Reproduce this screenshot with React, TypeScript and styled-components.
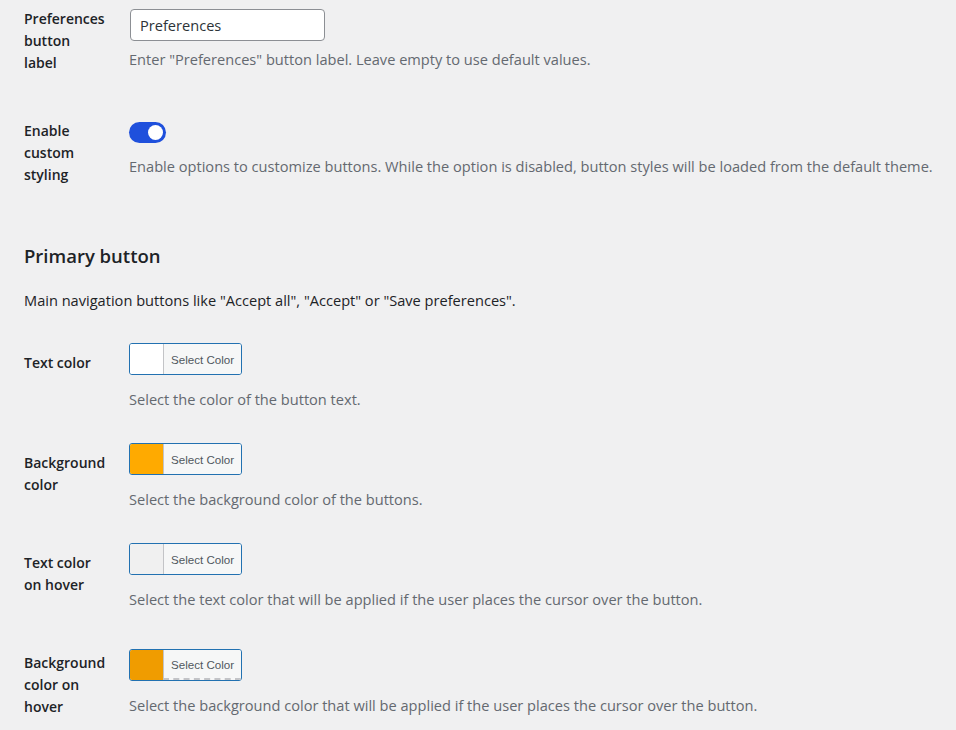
import React, { FC } from "react";
import styled, { createGlobalStyle } from "styled-components";

const GlobalStyle = createGlobalStyle`
  body {
    margin: 0;
    background: #f0f0f1;
    font-family: "Open Sans", "Noto Sans", sans-serif;
    font-size: 14.6px;
    color: #1d2327;
  }
`;

const Page = styled.div`
  padding: 1px 20px 0 24px;
  width: 956px;
  height: 730px;
  box-sizing: border-box;
  overflow: hidden;
`;

const Row = styled.div<{ $gap: number }>`
  display: flex;
  align-items: flex-start;
  margin-top: ${(p) => p.$gap}px;
`;

const Label = styled.div<{ $top: number }>`
  width: 80px;
  margin-right: 25px;
  padding-top: ${(p) => p.$top}px;
  font-size: 14px;
  font-weight: 600;
  line-height: 22px;
`;

const Field = styled.div<{ $top: number }>`
  flex: 1;
  padding-top: ${(p) => p.$top}px;
`;

const TextInput = styled.input`
  display: block;
  box-sizing: border-box;
  width: 195px;
  height: 32px;
  margin-left: 1px;
  padding: 0 9px;
  border: 1px solid #8c8f94;
  border-radius: 4px;
  background: #fff;
  color: #2c3338;
  font-family: inherit;
  font-size: 14.6px;
`;

const Description = styled.p<{ $gap: number }>`
  margin: ${(p) => p.$gap}px 0 0;
  color: #646970;
  line-height: 22px;
`;

const Switch = styled.span`
  display: flex;
  align-items: center;
  justify-content: flex-end;
  box-sizing: border-box;
  width: 37px;
  height: 21px;
  padding: 0 3px;
  border-radius: 11px;
  background: #1f50dc;
`;

const Knob = styled.span`
  width: 15px;
  height: 15px;
  border-radius: 50%;
  background: #fff;
`;

const Heading = styled.h2`
  margin: 57px 0 0;
  font-size: 18.5px;
  font-weight: 600;
  line-height: 25px;
`;

const Intro = styled.p`
  margin: 21px 0 0;
  line-height: 22px;
`;

const ColorButton = styled.button`
  display: flex;
  align-items: stretch;
  box-sizing: border-box;
  height: 32px;
  padding: 0;
  border: 1px solid #2271b1;
  border-radius: 3px;
  background: #f6f7f7;
  overflow: hidden;
  cursor: pointer;
`;

const Swatch = styled.span<{ $color: string }>`
  width: 33px;
  background: ${(p) => p.$color};
`;

const ButtonText = styled.span<{ $dashed?: boolean }>`
  display: flex;
  align-items: center;
  box-sizing: border-box;
  width: 78px;
  padding: 0 7px;
  border-left: 1px solid #c3c4c7;
  border-bottom: ${(p) => (p.$dashed ? "2px dashed #c3c4c7" : "none")};
  background: #f6f7f7;
  color: #50575e;
  font-family: inherit;
  font-size: 11.6px;
  white-space: nowrap;
`;

interface ColorRowProps {
  gap: number;
  top: number;
  label: string;
  color: string;
  hint: string;
  dashed?: boolean;
}

const ColorRow: FC<ColorRowProps> = ({ gap, top, label, color, hint, dashed }) => (
  <Row $gap={gap}>
    <Label $top={9}>{label}</Label>
    <Field $top={top}>
      <ColorButton type="button">
        <Swatch $color={color} />
        <ButtonText $dashed={dashed}>Select Color</ButtonText>
      </ColorButton>
      <Description $gap={13}>{hint}</Description>
    </Field>
  </Row>
);

const App: FC = () => (
  <Page>
    <GlobalStyle />
    <Row $gap={0}>
      <Label $top={7}>Preferences button label</Label>
      <Field $top={8}>
        <TextInput defaultValue="Preferences" />
        <Description $gap={7}>
          Enter "Preferences" button label. Leave empty to use default values.
        </Description>
      </Field>
    </Row>
    <Row $gap={39}>
      <Label $top={7}>Enable custom styling</Label>
      <Field $top={9}>
        <Switch>
          <Knob />
        </Switch>
        <Description $gap={12}>
          Enable options to customize buttons. While the option is disabled, button styles will be
          loaded from the default theme.
        </Description>
      </Field>
    </Row>
    <Heading>Primary button</Heading>
    <Intro>Main navigation buttons like "Accept all", "Accept" or "Save preferences".</Intro>
    <ColorRow
      gap={32}
      top={0}
      label="Text color"
      color="#ffffff"
      hint="Select the color of the button text."
    />
    <ColorRow
      gap={33}
      top={0}
      label="Background color"
      color="#ffaa00"
      hint="Select the background color of the buttons."
    />
    <ColorRow
      gap={33}
      top={0}
      label="Text color on hover"
      color="#f0f0f0"
      hint="Select the text color that will be applied if the user places the cursor over the button."
    />
    <ColorRow
      gap={33}
      top={6}
      label="Background color on hover"
      color="#f09c00"
      hint="Select the background color that will be applied if the user places the cursor over the button."
      dashed
    />
  </Page>
);

export default App;
